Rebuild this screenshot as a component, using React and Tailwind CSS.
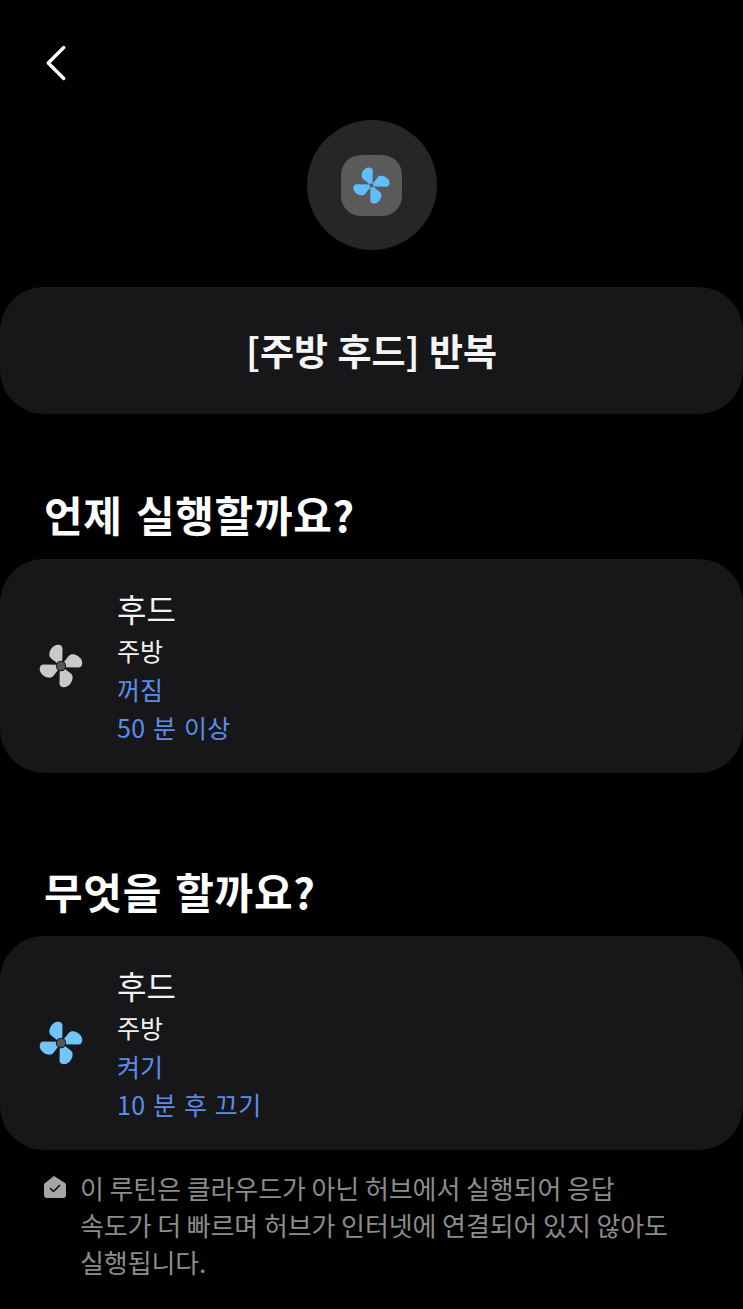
import { ChevronLeft } from "lucide-react";

const FONT = { fontFamily: '"Noto Sans CJK KR", "Noto Sans", sans-serif' };

const BLADE = "M1.200 -2 L1.500 -17.500 C1.500 -20.800 -2 -22 -5.500 -20.800 C-9.500 -19.200 -12.300 -14 -11.500 -10 C-10.800 -6.800 -6 -5.800 -3.500 -2 Z";

function FanIcon({ color, hub }) {
  return (
    <svg width="46" height="46" viewBox="-23 -23 46 46">
      {[0, 90, 180, 270].map((r) => (
        <path key={r} d={BLADE} fill={color} transform={`rotate(${r})`} />
      ))}
      {hub && <circle r="5.200" fill="#17171a" />}
      {hub && <circle r="4.300" fill="#55565a" />}
    </svg>
  );
}

function DeviceCard({ color, status, detail }) {
  return (
    <div className="flex h-[214px] items-center rounded-[44px] bg-[#17171a]">
      <div className="flex w-[117px] shrink-0 justify-start pl-[38px]">
        <FanIcon color={color} hub />
      </div>
      <div className="flex flex-col text-[25px] leading-[38.5px]">
        <span className="text-[32px] leading-[46px] text-[#f2f2f2]">후드</span>
        <span className="text-[#f0f0f0]">주방</span>
        <span className="text-[#5b8ee8]">{status}</span>
        <span className="tracking-[0.4px] text-[#5b8ee8] [word-spacing:1.500px]">{detail}</span>
      </div>
    </div>
  );
}

export default function App() {
  return (
    <div className="min-h-[1309px] w-[743px] overflow-hidden bg-black" style={FONT}>
      <div className="flex h-[120px] items-start pl-[25px] pt-[32px]">
        <ChevronLeft size={62} strokeWidth={1.3} className="text-white" />
      </div>

      <div className="flex justify-center">
        <div className="flex h-[130px] w-[130px] items-center justify-center rounded-full bg-[#262626]">
          <div className="flex h-[61px] w-[61px] items-center justify-center rounded-[20px] bg-[#5a5a5a]">
            <svg width="39" height="39" viewBox="-23 -23 46 46">
              {[0, 90, 180, 270].map((r) => (
                <path key={r} d={BLADE} fill="#62bdfb" transform={`rotate(${r})`} />
              ))}
            </svg>
          </div>
        </div>
      </div>

      <div className="mt-[37px] flex h-[127px] items-center justify-center rounded-[44px] bg-[#17171a]">
        <span className="text-[37px] font-semibold text-[#f5f5f5] [word-spacing:1px]">[주방 후드] 반복</span>
      </div>

      <h2 className="flex h-[145px] items-end pb-[21px] pl-[44px] text-[42px] leading-[48px] font-semibold tracking-[0.7px] text-white [word-spacing:3px]">
        언제 실행할까요?
      </h2>
      <DeviceCard color="#c9c9c9" status="꺼짐" detail="50 분 이상" />

      <h2 className="flex h-[163px] items-end pb-[21px] pl-[44px] text-[42px] leading-[48px] font-semibold tracking-[0.7px] text-white [word-spacing:3px]">
        무엇을 할까요?
      </h2>
      <DeviceCard color="#72c4fb" status="켜기" detail="10 분 후 끄기" />

      <div className="mt-[19px] flex pl-[43px] pr-[50px]">
        <svg width="24" height="24" viewBox="0 0 24 24" className="mt-[6px] shrink-0">
          <path d="M11 1 L22 8 Q23 8.700 23 10 L23 20 Q23 23 20 23 L4 23 Q1 23 1 20 L1 10 Q1 8.700 2 8 L11 1 Q12 .4 13 1 Z" fill="#a6a6a6" />
          <path d="M7.500 13.500 L10.500 16.500 L16.500 10.500" fill="none" stroke="#111" strokeWidth="1.700" strokeLinecap="round" strokeLinejoin="round" />
        </svg>
        <p className="ml-[13px] text-[26px] leading-[37px] tracking-[-0.1px] text-[#8c8c8c]">
          이 루틴은 클라우드가 아닌 허브에서 실행되어 응답
          <br />
          속도가 더 빠르며 허브가 인터넷에 연결되어 있지 않아도
          <br />
          실행됩니다.
        </p>
      </div>
    </div>
  );
}
